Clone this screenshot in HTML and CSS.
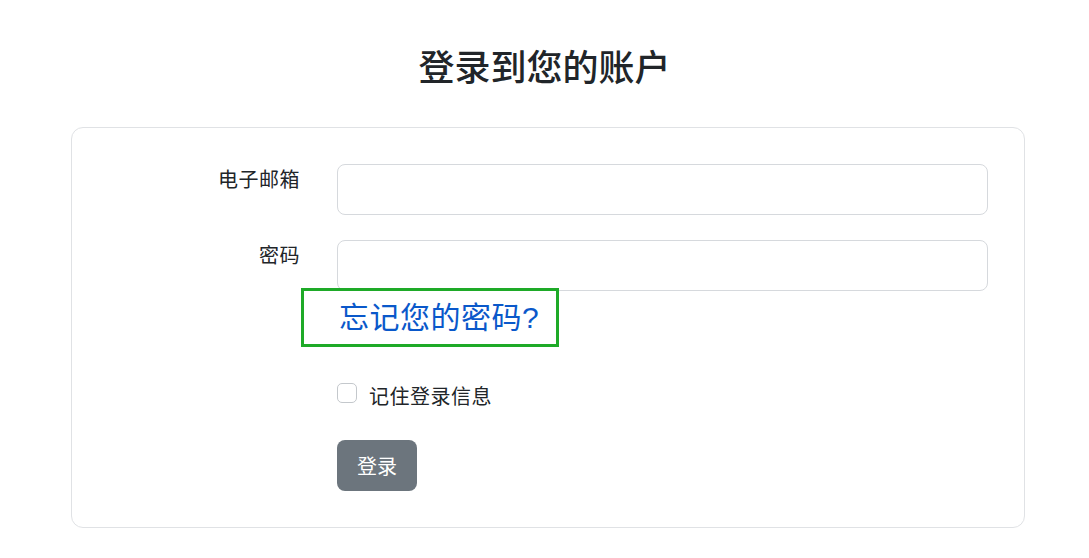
FILE: index.html
```html
<!DOCTYPE html>
<html lang="zh">
<head>
<meta charset="utf-8">
<title>登录到您的账户</title>
<link rel="stylesheet" href="styles.css">
</head>
<body>
<h1 class="title">登录到您的账户</h1>
<div class="card">
  <form class="form">
    <label class="label" for="email">电子邮箱</label>
    <input class="input" id="email" type="email">
    <label class="label" for="pw">密码</label>
    <input class="input" id="pw" type="password">
    <div class="spacer"></div>
    <div class="forgot-cell"><div class="forgot-box"><a class="forgot" href="#">忘记您的密码?</a></div></div>
    <div class="spacer"></div>
    <div class="check-row"><span class="checkbox"></span><span class="check-label">记住登录信息</span></div>
    <div class="spacer"></div>
    <div><button class="btn" type="button">登录</button></div>
  </form>
</div>
</body>
</html>
```

FILE: styles.css
```css
* { box-sizing: border-box; }
html, body { margin: 0; padding: 0; background: #fff; }
body {
  font-family: "Noto Sans CJK SC", "Noto Sans", sans-serif;
  font-size: 20px;
  line-height: 30px;
  color: #212529;
}
.title {
  margin: 44px 0 40px;
  font-size: 36px;
  line-height: 43px;
  font-weight: 500;
  text-align: center;
}
.card {
  margin-left: 71px;
  width: 954px;
  border: 1px solid #e0e2e5;
  border-radius: 12px;
  padding: 36px;
}
.form {
  display: grid;
  grid-template-columns: 192px 1fr;
  column-gap: 37px;
  row-gap: 0;
  margin: 0;
}
.label {
  text-align: right;
  line-height: 30px;
  letter-spacing: 0.5px;
}
.input {
  display: block;
  width: 100%;
  height: 51px;
  border: 1px solid #d6d9dd;
  border-radius: 8px;
  background: #fff;
  font: inherit;
  margin-bottom: 25px;
}
#pw { margin-bottom: 0; }
.forgot-cell { position: relative; height: 87px; }
.forgot-box {
  position: absolute;
  left: -36px;
  top: -3px;
  width: 258px;
  height: 59px;
  border: 3px solid #1eaa28;
  padding: 4px 0 0 35px;
}
.forgot {
  font-family: "Liberation Sans", "Noto Sans CJK SC", sans-serif;
  color: #0a58ca;
  text-decoration: none;
  font-size: 30px;
  line-height: 45px;
  letter-spacing: 0.5px;
}
.check-row {
  display: flex;
  align-items: flex-start;
  height: 62px;
}
.checkbox {
  width: 20px;
  height: 20px;
  margin-top: 5px;
  border: 1px solid #c4c8cc;
  border-radius: 5px;
  background: #fff;
  flex: none;
}
.check-label {
  margin-left: 12px;
  padding-top: 3px;
  letter-spacing: 0.5px;
}
.btn {
  display: inline-block;
  width: 80px;
  height: 51px;
  border: none;
  border-radius: 8px;
  background: #6c757d;
  color: #fff;
  font: inherit;
  font-size: 20px;
  padding: 0;
}
```
